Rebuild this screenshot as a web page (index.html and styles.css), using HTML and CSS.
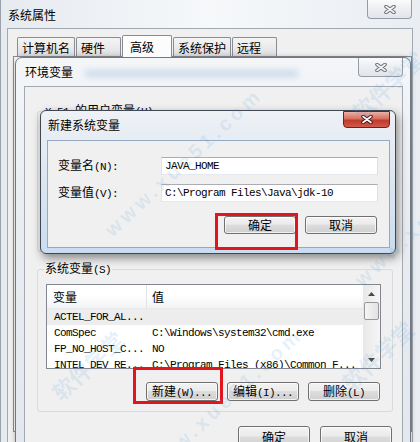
FILE: index.html
```html
<!DOCTYPE html>
<html lang="zh-CN">
<head>
    <meta charset="UTF-8">
    <title>系统属性 - 环境变量</title>
    <link rel="stylesheet" href="styles.css">
</head>
<body>
<div class="desktop">

    <!-- 系统属性 -->
    <div class="window props">
        <div class="titlebar">
            <span class="title">系统属性</span>
            <span class="close-btn">
                <svg width="12" height="9" viewBox="0 0 12 9"><path d="M2 1.5l8 6M10 1.5l-8 6" stroke="#6a7079" stroke-width="3.6" stroke-linecap="round"/><path d="M2 1.5l8 6M10 1.5l-8 6" stroke="#f4f5f6" stroke-width="1.6" stroke-linecap="round"/></svg>
            </span>
        </div>
        <div class="client">
            <div class="tabs">
                <span class="tab">计算机名</span>
                <span class="tab">硬件</span>
                <span class="tab active">高级</span>
                <span class="tab">系统保护</span>
                <span class="tab">远程</span>
            </div>
            <div class="tab-panel"></div>
        </div>
    </div>

    <!-- 环境变量 -->
    <div class="window env">
        <div class="titlebar">
            <span class="title">环境变量</span>
            <span class="streak"></span>
            <span class="close-btn">
                <svg width="12" height="9" viewBox="0 0 12 9"><path d="M2 1.5l8 6M10 1.5l-8 6" stroke="#6a7079" stroke-width="3.6" stroke-linecap="round"/><path d="M2 1.5l8 6M10 1.5l-8 6" stroke="#f4f5f6" stroke-width="1.6" stroke-linecap="round"/></svg>
            </span>
        </div>
        <div class="client">
            <fieldset class="group user">
                <legend><span class="a">X 51 </span>的用户变量<span class="a">(U)</span></legend>
            </fieldset>
            <fieldset class="group">
                <legend>系统变量<span class="a">(S)</span></legend>
                <div class="listbox">
                    <div class="list-body">
                        <div class="list-head">
                            <span class="c1">变量</span>
                            <span class="c2">值</span>
                        </div>
                        <div class="list-row sel">
                            <span class="c1 a">ACTEL_FOR_AL...</span>
                            <span class="c2 a"></span>
                        </div>
                        <div class="list-row">
                            <span class="c1 a">ComSpec</span>
                            <span class="c2 a">C:\Windows\system32\cmd.exe</span>
                        </div>
                        <div class="list-row">
                            <span class="c1 a">FP_NO_HOST_C...</span>
                            <span class="c2 a">NO</span>
                        </div>
                        <div class="list-row">
                            <span class="c1 a">INTEL_DEV_RE...</span>
                            <span class="c2 a">C:\Program Files (x86)\Common F...</span>
                        </div>
                    </div>
                    <div class="scrollbar">
                        <span class="sb-arrow"><svg width="7" height="4" viewBox="0 0 7 4"><path d="M0 4L3.5 0L7 4z" fill="#4a4a4a"/></svg></span>
                        <span class="sb-thumb"></span>
                        <span class="sb-track"></span>
                        <span class="sb-arrow"><svg width="7" height="4" viewBox="0 0 7 4"><path d="M0 0L3.5 4L7 0z" fill="#4a4a4a"/></svg></span>
                    </div>
                </div>
                <div class="btn-row">
                    <button class="btn">新建<span class="a">(W)...</span></button>
                    <button class="btn">编辑<span class="a">(I)...</span></button>
                    <button class="btn">删除<span class="a">(L)</span></button>
                </div>
            </fieldset>
            <div class="btn-row footer">
                <button class="btn">确定</button>
                <button class="btn">取消</button>
            </div>
        </div>
    </div>

    <!-- 新建系统变量 -->
    <div class="window dialog">
        <div class="titlebar">
            <span class="title">新建系统变量</span>
            <span class="close-btn red">
                <svg width="12" height="9" viewBox="0 0 12 9"><path d="M2 1.5l8 6M10 1.5l-8 6" stroke="#4b1710" stroke-width="3.6" stroke-linecap="round"/><path d="M2 1.5l8 6M10 1.5l-8 6" stroke="#fff" stroke-width="1.6" stroke-linecap="round"/></svg>
            </span>
        </div>
        <div class="client">
            <div class="field">
                <label>变量名<span class="a">(N):</span></label>
                <span class="input a">JAVA_HOME</span>
            </div>
            <div class="field">
                <label>变量值<span class="a">(V):</span></label>
                <span class="input a">C:\Program Files\Java\jdk-10</span>
            </div>
            <div class="btn-row">
                <button class="btn">确定</button>
                <button class="btn">取消</button>
            </div>
        </div>
    </div>

    <div class="mark mark-ok"></div>
    <div class="mark mark-new"></div>

    <span class="wm wm-url1">www.xue51.com</span>
    <span class="wm wm-url2">www.xue51.com</span>
    <span class="wm wm-url3">www.xue51.com</span>
    <span class="wm wm-logo1">软件学堂</span>
    <span class="wm wm-logo2">软件学堂</span>
    <span class="wm wm-logo3">软件学堂</span>
</div>
</body>
</html>
```

FILE: styles.css
```css
* {
    box-sizing: border-box;
}
body {
    margin: 0;
    font: 12px/14px "Noto Sans CJK SC", "Liberation Sans", sans-serif;
    color: #000;
    background: #fff;
}
.desktop {
    position: relative;
    width: 420px;
    height: 442px;
    overflow: hidden;
}
.a {
    font-family: "Liberation Mono", monospace;
    font-size: 11px;
    letter-spacing: -0.6px;
}

/* windows */
.window {
    border: 1px solid #7b838d;
}
.titlebar {
    display: flex;
    justify-content: space-between;
    align-items: flex-start;
}
.title {
    padding-top: 8px;
    white-space: nowrap;
}
.close-btn {
    display: flex;
    align-items: center;
    justify-content: center;
    width: 45px;
    height: 19px;
    border: 1px solid #969ca3;
    border-top: 0;
    border-radius: 0 0 4px 4px;
    background: linear-gradient(#fbfbfc, #eceef1 50%, #e2e5e9);
}
.client {
    background: #f0f0f0;
    border: 1px solid #a3a9b0;
}

.props {
    height: 442px;
    border-width: 0 0 0 1px;
    border-color: #9aa2ac;
    padding: 0 7px 0 6px;
    background: linear-gradient(90deg, #e6ebf0, #f6f8fa 50%, #e9edf2);
}
.props .titlebar {
    height: 28px;
    padding-left: 1px;
}
.props .close-btn {
    margin-right: 1px;
}
.props .client {
    height: 414px;
    border-bottom: 0;
    padding: 6px 0 0 5px;
}
.tabs {
    display: flex;
    align-items: flex-end;
    gap: 1px;
    height: 21px;
    padding-left: 4px;
}
.tab {
    min-width: 45px;
    height: 19px;
    padding: 3px 4px 0;
    border: 1px solid #898c95;
    border-bottom: 0;
    border-radius: 2px 2px 0 0;
    background: linear-gradient(#f4f4f4, #ebebeb 50%, #dcdcdc);
    white-space: nowrap;
}
.tab.active {
    position: relative;
    z-index: 1;
    min-width: 50px;
    height: 22px;
    margin-bottom: -1px;
    padding: 4px 7px 0;
    background: #fcfcfc;
}
.tab-panel {
    height: 376px;
    border: 1px solid #898c95;
    background: #fcfcfc;
}

.env {
    position: absolute;
    left: 15px;
    top: 57px;
    width: 396px;
    height: 400px;
    border-color: #6f7883;
    border-radius: 7px 7px 0 0;
    padding: 0 7px 0 8px;
    background: linear-gradient(#f4f6f8, #e9edf2 40%, #e3e8ee);
    box-shadow: 0 0 5px rgba(0, 0, 0, 0.25);
}
.env .titlebar {
    height: 28px;
}
.env .title {
    padding: 7px 0 0 1px;
}
.streak {
    flex: 1;
    height: 7px;
    margin: 12px 60px 0 12px;
    background: rgba(110, 160, 215, 0.3);
    filter: blur(3px);
}
.env .client {
    height: 371px;
    padding: 16px 9px 0 12px;
}

/* group boxes */
.group {
    margin: 0;
    padding: 7px 11px 10px 8px;
    border: 1px solid #d5dbe0;
    border-radius: 3px;
}
.group legend {
    margin-left: -2px;
    padding: 0 1px;
    white-space: nowrap;
}
.group.user {
    height: 149px;
}
.group + .group {
    margin-top: 9px;
}

.listbox {
    display: flex;
    height: 85px;
    border: 1px solid #828790;
    background: #fff;
}
.list-body {
    flex: 1;
    overflow: hidden;
}
.list-head {
    display: flex;
    height: 24px;
    border-bottom: 1px solid #e8e9eb;
    background: linear-gradient(#fff 45%, #f2f3f5);
}
.list-head .c1 {
    display: flex;
    align-items: center;
    border-right: 1px solid #e1e3e6;
    padding-left: 6px;
}
.list-head .c2 {
    display: flex;
    align-items: center;
}
.list-row {
    display: flex;
    align-items: center;
    height: 16px;
}
.list-row.sel {
    background: #ededed;
}
.c1 {
    flex: none;
    width: 100px;
    padding-left: 7px;
    white-space: nowrap;
}
.c2 {
    padding-left: 5px;
    white-space: nowrap;
}
.scrollbar {
    display: flex;
    flex-direction: column;
    width: 17px;
    background: linear-gradient(90deg, #e8e8e8, #f6f6f6);
}
.sb-arrow {
    display: flex;
    align-items: center;
    justify-content: center;
    height: 17px;
}
.sb-thumb {
    height: 18px;
    margin: 0 1px;
    border: 1px solid #979797;
    border-radius: 2px;
    background: linear-gradient(90deg, #f5f5f5, #e2e2e2);
}
.sb-track {
    flex: 1;
}

/* buttons */
.btn-row {
    display: flex;
    justify-content: flex-end;
    gap: 9px;
    padding-right: 1px;
}
.group .btn-row {
    margin-top: 13px;
}
.btn {
    width: 72px;
    height: 19px;
    padding: 0;
    border: 1px solid #707070;
    border-radius: 3px;
    background: linear-gradient(#f3f3f3, #ebebeb 45%, #dddddd 50%, #cfcfcf);
    box-shadow: inset 0 0 0 1px rgba(255, 255, 255, 0.7);
    font: 12px/14px "Noto Sans CJK SC", "Liberation Sans", sans-serif;
    color: #000;
    white-space: nowrap;
}
.footer {
    margin-top: 14px;
    gap: 10px;
}
.footer .btn {
    height: 22px;
}

/* new variable dialog */
.dialog {
    position: absolute;
    left: 40px;
    top: 110px;
    width: 356px;
    height: 144px;
    border-color: #3e4753;
    border-radius: 6px;
    padding: 0 5px 5px 6px;
    background: linear-gradient(#eef1f5, #dfe8f2 40%, #cadcf0);
    box-shadow: 2px 4px 10px rgba(0, 0, 0, 0.45);
}
.dialog .titlebar {
    height: 29px;
}
.dialog .title {
    padding: 7px 0 0 1px;
}
.close-btn.red {
    width: 47px;
    height: 17px;
    border: 1px solid #6b2219;
    border-radius: 0 0 4px 4px;
    background: linear-gradient(#eab0a6, #d5705f 45%, #c23a2b 55%, #cf5a4b);
}
.dialog .client {
    height: 108px;
    padding: 16px 11px 0 10px;
    border-color: #94a9c2;
}
.field {
    display: flex;
    align-items: center;
}
.field + .field {
    margin-top: 9px;
}
.field label {
    width: 103px;
    white-space: nowrap;
}
.input {
    width: 217px;
    height: 18px;
    padding-left: 3px;
    border: 1px solid;
    border-color: #abadb3 #dbdfe6 #e3e9ef #e2e3ea;
    background: #fff;
    line-height: 16px;
    white-space: nowrap;
}
.dialog .btn-row {
    margin-top: 14px;
}
.dialog .btn {
    height: 18px;
}

/* red highlight boxes */
.mark {
    position: absolute;
    border: 3px solid #e3141b;
}
.mark-ok {
    left: 215px;
    top: 213px;
    width: 83px;
    height: 37px;
}
.mark-new {
    left: 133px;
    top: 367px;
    width: 90px;
    height: 37px;
}

/* watermarks */
.wm {
    position: absolute;
    color: rgba(70, 150, 220, 0.14);
    font: bold 20px/24px "Liberation Sans", "Noto Sans CJK SC", sans-serif;
    white-space: nowrap;
    transform: rotate(-43deg);
    pointer-events: none;
}
.wm-url1 {
    left: 80px;
    top: 150px;
    letter-spacing: 4px;
}
.wm-url2 {
    left: 120px;
    top: 390px;
    letter-spacing: 4px;
}
.wm-url3 {
    left: 330px;
    top: 200px;
    letter-spacing: 4px;
}
.wm-logo1 {
    left: 45px;
    top: 355px;
    font-size: 22px;
}
.wm-logo2 {
    left: 335px;
    top: 345px;
    font-size: 22px;
}
.wm-logo3 {
    left: 345px;
    top: 75px;
    font-size: 22px;
}
```
